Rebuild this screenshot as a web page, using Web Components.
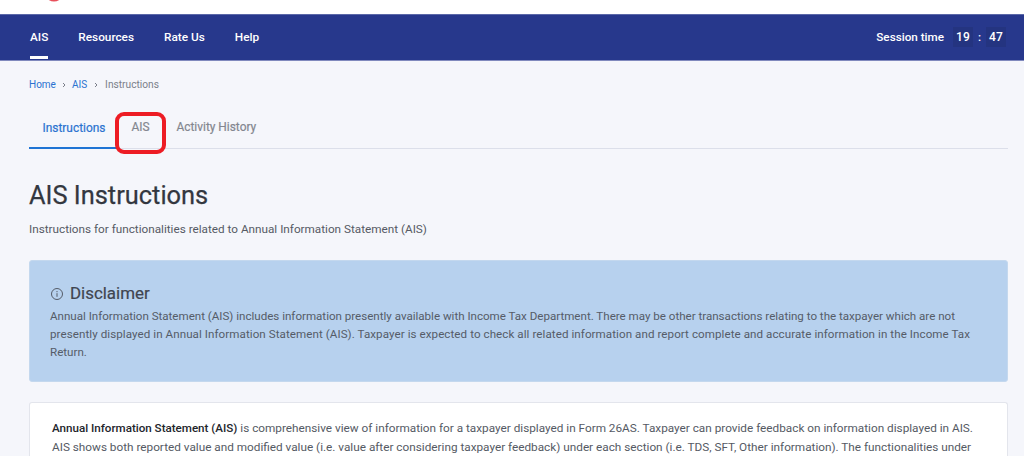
<!DOCTYPE html>
<html>
<head>
<meta charset="utf-8">
<style>
  html, body { margin: 0; height: 456px; overflow: hidden; background: #f5f6fb; font-family: Roboto, sans-serif; }
</style>
</head>
<body>
<ais-topstrip></ais-topstrip>
<ais-navbar></ais-navbar>
<ais-page>
  <ais-breadcrumb></ais-breadcrumb>
  <ais-tabs></ais-tabs>
  <ais-heading></ais-heading>
  <ais-disclaimer></ais-disclaimer>
  <ais-infocard></ais-infocard>
</ais-page>
<script>
class AisTopstrip extends HTMLElement {
  constructor() {
    super();
    this.attachShadow({ mode: 'open' }).innerHTML = `
      <style>
        :host { display: block; height: 14px; background: #fff; overflow: hidden; }
        svg { display: block; margin-left: 47px; }
      </style>
      <svg width="14" height="14" viewBox="0 0 14 14"><path d="M1 -2 Q7 2.5 13 -2" fill="none" stroke="#e8505b" stroke-width="2.5"/></svg>`;
  }
}
class AisNavbar extends HTMLElement {
  constructor() {
    super();
    this.attachShadow({ mode: 'open' }).innerHTML = `
      <style>
        :host { display: flex; box-sizing: border-box; height: 47px; background: #27388c; border-top: 1px solid #5b68a8; border-bottom: 1px solid #8089bd;
          align-items: stretch; justify-content: space-between; padding: 0 18px 0 30px; color: #fff; font: 500 11.8px Roboto, sans-serif; }
        nav { display: flex; gap: 30px; }
        a { display: flex; align-items: center; height: 44px; box-sizing: border-box; position: relative; }
        a.on::after { content: ""; position: absolute; left: 0; right: 0; bottom: 0; height: 3px; background: #fff; }
        .session { display: flex; align-items: center; height: 44px; }
        .box { background: #243480; width: 20px; height: 20px; display: flex; align-items: center; justify-content: center; font-size: 12px; letter-spacing: .3px; }
        .label { margin-right: 9px; font-size: 11.7px; }
        .colon { width: 13px; text-align: center; }
      </style>
      <nav><a class="on">AIS</a><a>Resources</a><a>Rate Us</a><a>Help</a></nav>
      <div class="session"><span class="label">Session time</span><span class="box">19</span><span class="colon">:</span><span class="box">47</span></div>`;
  }
}
class AisPage extends HTMLElement {
  constructor() {
    super();
    this.attachShadow({ mode: 'open' }).innerHTML = `
      <style>:host { display: block; padding: 0 16px 0 29px; }</style>
      <slot></slot>`;
  }
}
class AisBreadcrumb extends HTMLElement {
  constructor() {
    super();
    this.attachShadow({ mode: 'open' }).innerHTML = `
      <style>
        :host { display: flex; align-items: center; gap: 4px; padding-top: 17px; height: 14px; font: 400 10px/14px Roboto, sans-serif; color: #7b7f8a; }
        a { color: #2a72d0; }
        svg { display: block; }
        .last { margin-left: 1px; }
        span { font-size: 10.2px; }
      </style>
      <a>Home</a><svg width="8" height="8" viewBox="0 0 8 8"><path d="M3 2l2 2-2 2" fill="none" stroke="#7b7f8a"/></svg>
      <a>AIS</a><svg class="last" width="8" height="8" viewBox="0 0 8 8"><path d="M3 2l2 2-2 2" fill="none" stroke="#7b7f8a"/></svg>
      <span class="last">Instructions</span>`;
  }
}
class AisTabs extends HTMLElement {
  constructor() {
    super();
    this.attachShadow({ mode: 'open' }).innerHTML = `
      <style>
        :host { display: flex; position: relative; margin-top: 14px; height: 42px; border-bottom: 1px solid #dcdfea; font: 400 11.9px Roboto, sans-serif; -webkit-text-stroke: .2px currentColor; color: #83868f; }
        .tab { display: flex; align-items: center; padding: 0 13.5px; height: 42px; box-sizing: border-box; }
        .on { color: #2a72d0; border-bottom: 2px solid #1f74d4; padding: 2px 13px 0 13.5px; height: 43px; }
        .mid { padding-right: 13.5px; padding-left: 13px; }
        .mark { position: absolute; left: 86px; top: 6px; width: 51px; height: 42px; box-sizing: border-box; border: 4px solid #ed1c24; border-radius: 9px; }
      </style>
      <div class="tab on">Instructions</div><div class="tab mid">AIS</div><div class="tab">Activity History</div>
      <div class="mark"></div>`;
  }
}
class AisHeading extends HTMLElement {
  constructor() {
    super();
    this.attachShadow({ mode: 'open' }).innerHTML = `
      <style>
        :host { display: block; padding-top: 30px; color: #33373f; }
        h1 { margin: 0; font: 400 25.4px/33px Roboto, sans-serif; -webkit-text-stroke: .25px currentColor; }
        p { margin: 9px 0 0; font: 400 11.74px/16px Roboto, sans-serif; color: #555a64; }
      </style>
      <h1>AIS Instructions</h1>
      <p>Instructions for functionalities related to Annual Information Statement (AIS)</p>`;
  }
}
class AisDisclaimer extends HTMLElement {
  constructor() {
    super();
    this.attachShadow({ mode: 'open' }).innerHTML = `
      <style>
        :host { display: block; box-sizing: border-box; height: 122px; margin-top: 23px; padding: 22px 20px; background: #b7d1ee; border: 1px solid #c4d8ee; border-radius: 3px; color: #555c68; }
        .head { display: flex; align-items: center; gap: 6px; font: 400 16.9px/21px Roboto, sans-serif; color: #3f4550; -webkit-text-stroke: .2px currentColor; }
        p { margin: 3px 0 0; font: 400 11.6px/18px Roboto, sans-serif; }
        .l1 { letter-spacing: -.012px; }
        .l2 { letter-spacing: .07px; }
        span { display: block; white-space: nowrap; }
        svg { display: block; }
      </style>
      <div class="head"><svg width="14" height="14" viewBox="0 0 14 14" fill="none" stroke="#555c68"><circle cx="7" cy="7" r="5.5"/><path d="M7 6.2v3.6M7 4v1.2"/></svg>Disclaimer</div>
      <p><span class="l1">Annual Information Statement (AIS) includes information presently available with Income Tax Department. There may be other transactions relating to the taxpayer which are not</span> <span class="l2">presently displayed in Annual Information Statement (AIS). Taxpayer is expected to check all related information and report complete and accurate information in the Income Tax</span> <span>Return.</span></p>`;
  }
}
class AisInfocard extends HTMLElement {
  constructor() {
    super();
    this.attachShadow({ mode: 'open' }).innerHTML = `
      <style>
        :host { display: block; box-sizing: border-box; margin-top: 20px; height: 54px; padding: 16px 22px 0; background: #fff; border: 1px solid #e3e5ec; border-bottom: 0; border-radius: 3px 3px 0 0; font: 400 11.78px/19px Roboto, sans-serif; color: #555a64; overflow: hidden; }
        b { color: #22252b; font-weight: 500; font-size: 11.6px; }
        div { white-space: nowrap; }
      </style>
      <div><b>Annual Information Statement (AIS)</b> is comprehensive view of information for a taxpayer displayed in Form 26AS. Taxpayer can provide feedback on information displayed in AIS.</div>
      <div>AIS shows both reported value and modified value (i.e. value after considering taxpayer feedback) under each section (i.e. TDS, SFT, Other information). The functionalities under</div>`;
  }
}
customElements.define('ais-topstrip', AisTopstrip);
customElements.define('ais-navbar', AisNavbar);
customElements.define('ais-page', AisPage);
customElements.define('ais-breadcrumb', AisBreadcrumb);
customElements.define('ais-tabs', AisTabs);
customElements.define('ais-heading', AisHeading);
customElements.define('ais-disclaimer', AisDisclaimer);
customElements.define('ais-infocard', AisInfocard);
</script>
</body>
</html>
